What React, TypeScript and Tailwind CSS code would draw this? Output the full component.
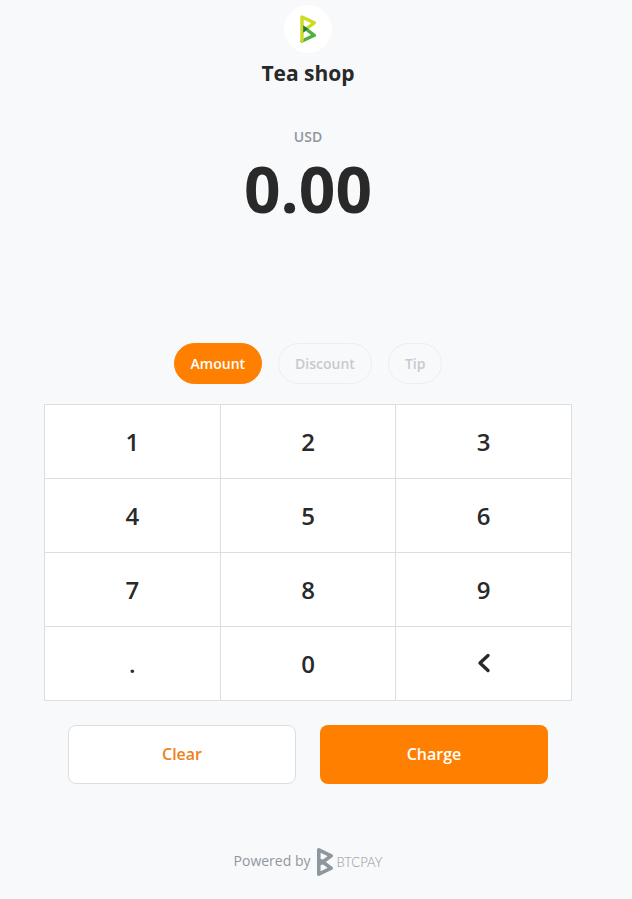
import { useState } from "react";

const KEYS = ["1", "2", "3", "4", "5", "6", "7", "8", "9", ".", "0", "back"];
const MODES = ["Amount", "Discount", "Tip"];

function StoreLogo() {
  return (
    <div className="flex size-12 items-center justify-center rounded-full bg-white">
      <svg viewBox="0 0 16 28" className="h-7 w-4" fill="none" strokeLinecap="round" strokeLinejoin="round" aria-hidden="true">
        <path d="M2 26 14.3 20.3 6 14" stroke="#51b13e" strokeWidth="3.4" />
        <path d="M2 25.5V2L14.3 7.8 6 14" stroke="#cedc21" strokeWidth="3.4" />
        <path d="M3.2 10.2v7.6L8.6 14Z" fill="#1e7a44" />
      </svg>
    </div>
  );
}

function BtcPayMark() {
  return (
    <svg viewBox="0 0 16 28" className="h-7 w-4" fill="none" stroke="#8f979e" strokeWidth="3.6" strokeLinecap="round" strokeLinejoin="round" aria-hidden="true">
      <path d="M1.8 26.2V1.8L14.2 7.8 4 15.2M1.8 26.2 14.2 20.2 4 12.8" />
      <path d="M2 10.5v7L7 14Z" fill="#8f979e" stroke="none" />
    </svg>
  );
}

export default function App() {
  const [mode, setMode] = useState("Amount");
  const [digits, setDigits] = useState("");

  const press = (key: string) => {
    if (key === "back") setDigits(digits.slice(0, -1));
    else if (key !== ".") setDigits((digits + key).slice(0, 8));
  };

  return (
    <div className="min-h-screen bg-[#f8f9fb] pr-4 font-['Open_Sans','Noto_Sans',sans-serif] text-[#292929]">
      <main className="mx-auto flex w-full max-w-[528px] flex-col items-center pt-[5px]">
        <StoreLogo />
        <h1 className="mt-1 text-[21px] leading-8 font-bold">Tea shop</h1>
        <div className="mt-9 text-sm leading-6 font-semibold text-[#8f979e]">USD</div>
        <output className="text-[64px] leading-20 font-bold">{(Number(digits) / 100).toFixed(2)}</output>

        <div role="radiogroup" aria-label="Entry mode" className="mt-[114px] flex gap-4">
          {MODES.map((name) => (
            <label
              key={name}
              className="flex h-[41px] cursor-pointer items-center rounded-full border border-[#edeef0] px-4 text-sm font-semibold text-[#c7cace] has-checked:border-[#ff8000] has-checked:bg-[#ff8000] has-checked:text-white"
            >
              <input type="radio" name="mode" className="size-0 appearance-none" checked={mode === name} onChange={() => setMode(name)} />
              {name}
            </label>
          ))}
        </div>

        <div className="mt-5 grid w-full grid-cols-3 border-t border-l border-[#dcdfe2] bg-white">
          {KEYS.map((key) => (
            <button
              key={key}
              type="button"
              aria-label={key === "back" ? "Delete" : undefined}
              onClick={() => press(key)}
              className="flex h-[74px] items-center justify-center border-r border-b border-[#dcdfe2] text-2xl font-semibold"
            >
              {key === "back" ? (
                <svg viewBox="0 0 24 24" className="size-6" fill="none" stroke="currentColor" strokeWidth="3.4" strokeLinecap="round" strokeLinejoin="round" aria-hidden="true">
                  <path d="M16 3.5 8 11l8 7.5" />
                </svg>
              ) : (
                key
              )}
            </button>
          ))}
        </div>

        <div className="mt-6 grid w-full grid-cols-2 gap-6 px-6 font-semibold">
          <button type="button" onClick={() => setDigits("")} className="h-[59px] rounded-lg border border-[#dcdfe2] bg-white pb-0.5 text-[#ef7f1a]">
            Clear
          </button>
          <button type="button" className="h-[59px] rounded-lg bg-[#ff8000] pb-0.5 text-white">
            Charge
          </button>
        </div>

        <footer className="mt-16 pb-5 text-sm text-[#8f979e]">
          <a href="#btcpay" className="flex items-center">
            <span className="pb-0.5">Powered by</span>
            <span className="ml-[7px] flex items-center gap-[3px]">
              <BtcPayMark />
              <span className="font-[Lato,sans-serif] text-[13px] font-light">BTCPAY</span>
            </span>
          </a>
        </footer>
      </main>
    </div>
  );
}
